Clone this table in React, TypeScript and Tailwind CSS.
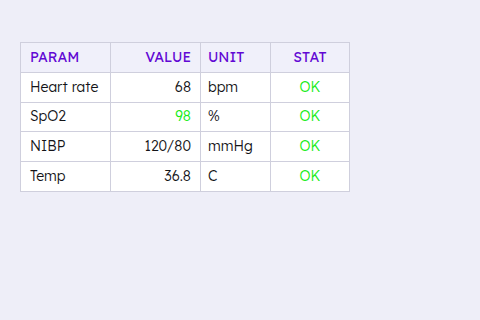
const rows = [
  { param: "Heart rate", value: "68", unit: "bpm", hi: false },
  { param: "SpO2", value: "98", unit: "%", hi: true },
  { param: "NIBP", value: "120/80", unit: "mmHg", hi: false },
  { param: "Temp", value: "36.8", unit: "C", hi: false },
];

export default function App() {
  return (
    <main
      className="w-[480px] h-[320px] bg-[#eeeef8] pt-[42px] pl-[20px]"
      style={{ fontFamily: "Lexend, Inter, 'Liberation Sans', sans-serif" }}
    >
      <table className="border-collapse text-[14px] w-[329px] table-fixed">
        <colgroup>
          <col className="w-[90px]" />
          <col className="w-[90px]" />
          <col className="w-[70px]" />
          <col className="w-[79px]" />
        </colgroup>
        <thead>
          <tr className="h-[29.8px] bg-[#f0f0fa] text-[#6208d4]">
            <th className="border border-[#cfcfdd] px-[9px] text-left font-normal">PARAM</th>
            <th className="border border-[#cfcfdd] px-[9px] text-right font-normal">VALUE</th>
            <th className="border border-[#cfcfdd] px-[7px] text-left font-normal">UNIT</th>
            <th className="border border-[#cfcfdd] px-[9px] text-center font-normal">STAT</th>
          </tr>
        </thead>
        <tbody className="bg-white text-[#141418] font-[350]">
          {rows.map((r) => (
            <tr key={r.param} className="h-[29.8px]">
              <td className="border border-[#cfcfdd] px-[9px]">{r.param}</td>
              <td
                className={
                  r.hi
                    ? "border border-[#cfcfdd] px-[9px] text-right text-[#14ec14]"
                    : "border border-[#cfcfdd] px-[9px] text-right"
                }
              >
                {r.value}
              </td>
              <td className="border border-[#cfcfdd] px-[7px]">{r.unit}</td>
              <td className="border border-[#cfcfdd] px-[9px] text-center text-[#14ec14]">OK</td>
            </tr>
          ))}
        </tbody>
      </table>
    </main>
  );
}
